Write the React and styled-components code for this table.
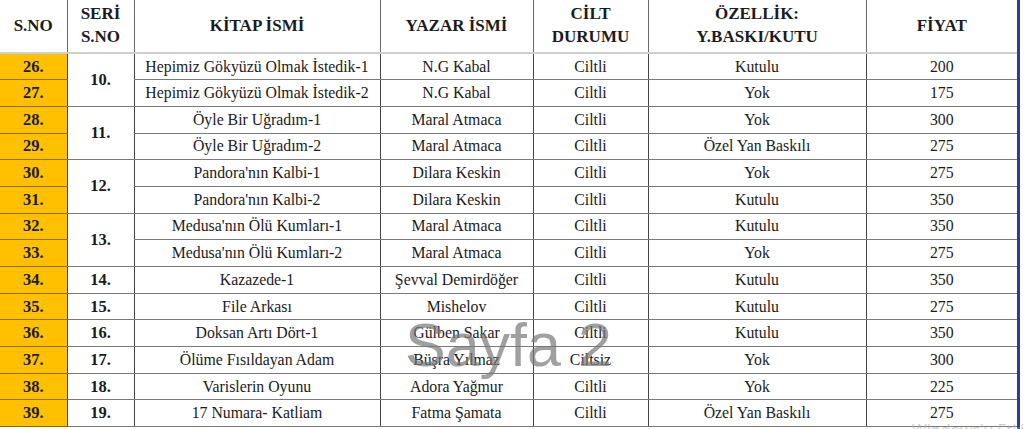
import React from "react";
import styled, { createGlobalStyle, css } from "styled-components";

const GlobalStyle = createGlobalStyle`
  html, body {
    margin: 0;
    padding: 0;
    background: #ffffff;
    overflow: hidden;
  }
`;

const serif = `"Liberation Serif", "Times New Roman", "DejaVu Serif", serif`;

const Page = styled.div`
  position: relative;
  width: 1024px;
  height: 429px;
  overflow: hidden;
  background: #ffffff;
  font-family: ${serif};
  color: #1b1b1b;
`;

const Sheet = styled.div`
  width: 1017px;
  height: 429px;
  overflow: hidden;
  border-right: 3px solid #2c3b9e;
`;

const Table = styled.table`
  border-collapse: collapse;
  table-layout: fixed;
  width: 1017px;
  font-family: ${serif};
  color: #1b1b1b;
`;

const Row = styled.tr`
  height: ${props => props.h}px;
`;

const HeadCell = styled.th`
  padding: 0 2px 2px;
  font-family: ${serif};
  font-size: 17px;
  font-weight: bold;
  line-height: 23px;
  text-align: center;
  vertical-align: middle;
  white-space: nowrap;
  border-left: 1px solid #6a6a6a;
  border-bottom: 2px solid #cfcfcf;
  &:first-child {
    border-left: none;
  }
`;

const Cell = styled.td`
  padding: 0 2px;
  font-family: ${serif};
  font-size: 15.8px;
  line-height: 18px;
  text-align: center;
  vertical-align: middle;
  white-space: nowrap;
  border-left: 1px solid #444;
  border-bottom: 1px solid #7a7a7a;
  ${props =>
    props.bold &&
    css`
      font-weight: bold;
      font-size: 16.5px;
    `};
  ${props =>
    props.yellow &&
    css`
      background: #ffc000;
      border-left: none;
      border-bottom-color: #8e6d00;
    `};
`;

const Watermark = styled.div`
  position: absolute;
  left: 405px;
  top: 315px;
  font-family: "Liberation Sans", Arial, sans-serif;
  font-size: 61px;
  line-height: 1;
  color: rgba(120, 120, 120, 0.7);
  white-space: nowrap;
  pointer-events: none;
`;

const ActivateNote = styled.div`
  position: absolute;
  left: 912px;
  top: 422px;
  font-family: "Open Sans", "Liberation Sans", sans-serif;
  font-size: 16px;
  line-height: 1;
  color: rgba(170, 170, 170, 0.6);
  white-space: nowrap;
`;

const widths = [67, 67, 246, 153, 115, 218, 151];

const groups = [
  {
    seri: "10.",
    rows: [
      ["26.", "Hepimiz Gökyüzü Olmak İstedik-1", "N.G Kabal", "Ciltli", "Kutulu", "200"],
      ["27.", "Hepimiz Gökyüzü Olmak İstedik-2", "N.G Kabal", "Ciltli", "Yok", "175"]
    ]
  },
  {
    seri: "11.",
    rows: [
      ["28.", "Öyle Bir Uğradım-1", "Maral Atmaca", "Ciltli", "Yok", "300"],
      ["29.", "Öyle Bir Uğradım-2", "Maral Atmaca", "Ciltli", "Özel Yan Baskılı", "275"]
    ]
  },
  {
    seri: "12.",
    rows: [
      ["30.", "Pandora'nın Kalbi-1", "Dilara Keskin", "Ciltli", "Yok", "275"],
      ["31.", "Pandora'nın Kalbi-2", "Dilara Keskin", "Ciltli", "Kutulu", "350"]
    ]
  },
  {
    seri: "13.",
    rows: [
      ["32.", "Medusa'nın Ölü Kumları-1", "Maral Atmaca", "Ciltli", "Kutulu", "350"],
      ["33.", "Medusa'nın Ölü Kumları-2", "Maral Atmaca", "Ciltli", "Yok", "275"]
    ]
  },
  { seri: "14.", rows: [["34.", "Kazazede-1", "Şevval Demirdöğer", "Ciltli", "Kutulu", "350"]] },
  { seri: "15.", rows: [["35.", "File Arkası", "Mishelov", "Ciltli", "Kutulu", "275"]] },
  { seri: "16.", rows: [["36.", "Doksan Artı Dört-1", "Gülben Sakar", "Ciltli", "Kutulu", "350"]] },
  { seri: "17.", rows: [["37.", "Ölüme Fısıldayan Adam", "Büşra Yılmaz", "Ciltsiz", "Yok", "300"]] },
  { seri: "18.", rows: [["38.", "Varislerin Oyunu", "Adora Yağmur", "Ciltli", "Yok", "225"]] },
  { seri: "19.", rows: [["39.", "17 Numara- Katliam", "Fatma Şamata", "Ciltli", "Özel Yan Baskılı", "275"]] }
];

export default function App() {
  return (
    <Page>
      <GlobalStyle />
      <Sheet>
        <Table>
          <colgroup>
            {widths.map((w, i) => (
              <col key={i} style={{ width: w }} />
            ))}
          </colgroup>
          <thead>
            <Row h={53}>
              <HeadCell>S.NO</HeadCell>
              <HeadCell>
                SERİ
                <br />
                S.NO
              </HeadCell>
              <HeadCell>KİTAP İSMİ</HeadCell>
              <HeadCell>YAZAR İSMİ</HeadCell>
              <HeadCell>
                CİLT
                <br />
                DURUMU
              </HeadCell>
              <HeadCell>
                ÖZELLİK:
                <br />
                Y.BASKI/KUTU
              </HeadCell>
              <HeadCell>FİYAT</HeadCell>
            </Row>
          </thead>
          <tbody>
            {groups.map(group =>
              group.rows.map(([no, title, author, cover, extra, price], i) => (
                <Row h={26.7} key={no}>
                  <Cell yellow bold>
                    {no}
                  </Cell>
                  {i === 0 && (
                    <Cell bold rowSpan={group.rows.length}>
                      {group.seri}
                    </Cell>
                  )}
                  <Cell>{title}</Cell>
                  <Cell>{author}</Cell>
                  <Cell>{cover}</Cell>
                  <Cell>{extra}</Cell>
                  <Cell>{price}</Cell>
                </Row>
              ))
            )}
          </tbody>
        </Table>
      </Sheet>
      <Watermark>Sayfa 2</Watermark>
      <ActivateNote>Windows'u Etkinleştir</ActivateNote>
    </Page>
  );
}
